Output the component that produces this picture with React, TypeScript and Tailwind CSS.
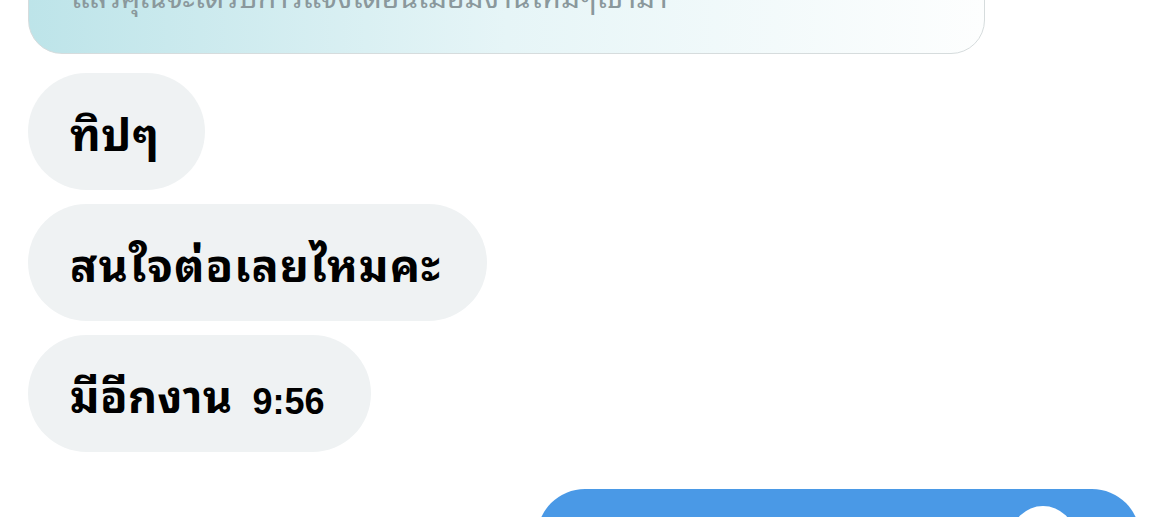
import React from "react";

const thai = {
  fontFamily:
    '"Noto Sans Thai Looped", "Loma", "Garuda", "Tlwg Typo", "Noto Sans Thai", "Noto Sans", sans-serif',
};

function Bubble({ children }: { children: React.ReactNode }) {
  return (
    <div className="flex h-[117px] items-center self-start rounded-full bg-[#eff2f3] pl-[42px] pr-[46px]">
      {children}
    </div>
  );
}

export default function App() {
  return (
    <div className="h-[517px] w-[1170px] overflow-hidden bg-white" style={thai}>
      <div className="flex flex-col pl-[28px]">
        <div className="mt-[-86px] flex h-[140px] w-[957px] flex-col justify-start rounded-[34px] border border-[#d6dcdd] bg-gradient-to-r from-[#bde4e9] via-[#e6f5f7] to-[#fdfefe] px-[42px] pt-[54px]">
          <div className="text-[30px] leading-[52px] text-[#8a989c]">
            แล้วคุณจะได้รับการแจ้งเตือนเมื่อมีงานใหม่ๆเข้ามา
          </div>
        </div>
        <div className="mt-[19px] flex flex-col gap-[14px]">
          <Bubble>
            <span className="text-[45px] font-bold tracking-[0.5px] text-black">ทิปๆ</span>
          </Bubble>
          <Bubble>
            <span className="text-[45px] font-bold tracking-[1.1px] text-black">สนใจต่อเลยไหมคะ</span>
          </Bubble>
          <Bubble>
            <span className="text-[45px] font-bold tracking-[0.3px] text-black">มีอีกงาน</span>
            <span
              className="ml-[20px] mt-[16px] text-[36px] font-bold text-black"
              style={{ fontFamily: '"Liberation Sans", Arial, sans-serif' }}
            >
              9:56
            </span>
          </Bubble>
        </div>
        <div className="ml-[509px] mt-[37px] flex h-[120px] w-[603px] justify-end rounded-[48px] bg-[#4a99e6] pr-[65px] pt-[17px]">
          <div className="h-[64px] w-[64px] rounded-full bg-white" />
        </div>
      </div>
    </div>
  );
}
